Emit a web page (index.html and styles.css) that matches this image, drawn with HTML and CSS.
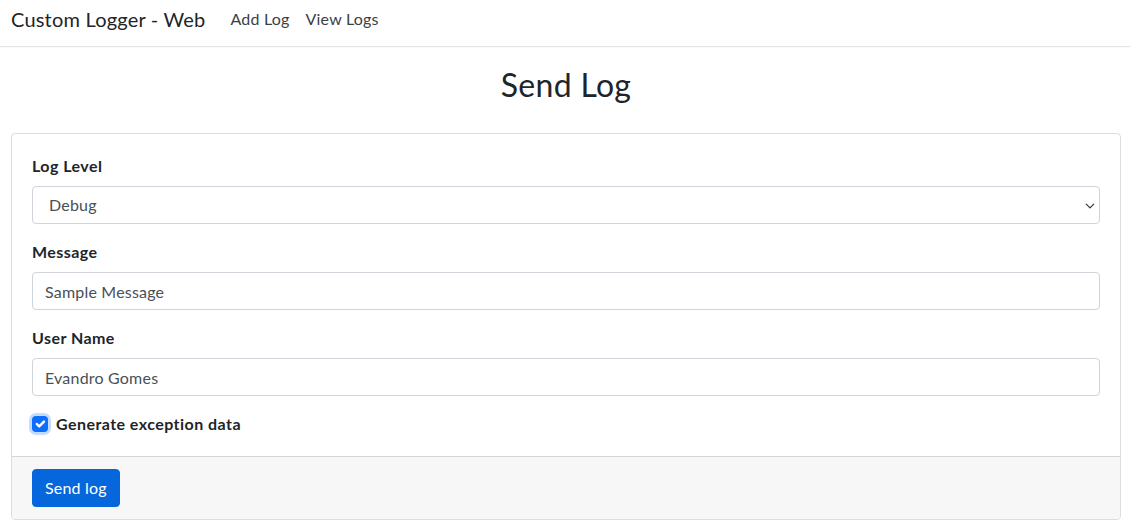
FILE: index.html
```html
<!DOCTYPE html>
<html lang="en">
<head>
<meta charset="utf-8">
<title>Custom Logger - Web</title>
<link rel="stylesheet" href="styles.css">
</head>
<body>
<header class="navbar">
  <a class="brand" href="#">Custom Logger - Web</a>
  <nav class="nav">
    <a class="nav-link" href="#">Add Log</a>
    <a class="nav-link" href="#">View Logs</a>
  </nav>
</header>
<main class="container">
  <h2 class="title">Send Log</h2>
  <form class="card">
    <div class="card-body">
      <div class="field">
        <label class="label" for="lvl">Log Level</label>
        <div class="select-wrap">
          <select id="lvl" class="control select">
            <option>Debug</option>
            <option>Information</option>
            <option>Warning</option>
            <option>Error</option>
          </select>
          <svg class="chev" width="16" height="16" viewBox="0 0 16 16"><path d="M2 5l6 6 6-6" fill="none" stroke="#343a40" stroke-width="2" stroke-linecap="round" stroke-linejoin="round"/></svg>
        </div>
      </div>
      <div class="field">
        <label class="label" for="msg">Message</label>
        <input id="msg" class="control" type="text" value="Sample Message">
      </div>
      <div class="field">
        <label class="label" for="usr">User Name</label>
        <input id="usr" class="control" type="text" value="Evandro Gomes">
      </div>
      <div class="check">
        <span class="check-box">
          <svg width="16" height="16" viewBox="0 0 20 20"><path d="M6 10l3 3 6-6" fill="none" stroke="#fff" stroke-width="3" stroke-linecap="round" stroke-linejoin="round"/></svg>
        </span>
        <label class="check-label">Generate exception data</label>
      </div>
    </div>
    <div class="card-footer">
      <button type="button" class="btn">Send log</button>
    </div>
  </form>
</main>
</body>
</html>
```
FILE: styles.css
```css
* { box-sizing: border-box; }
html, body { margin: 0; padding: 0; }
body {
  font-family: Lato, "Open Sans", "Liberation Sans", sans-serif;
  font-size: 16px;
  line-height: 1.5;
  color: #212529;
  background: #fff;
  letter-spacing: 0.2px;
}
a { text-decoration: none; }
.navbar {
  display: flex;
  align-items: center;
  height: 47px;
  padding: 0 11px 8px;
  border-bottom: 1px solid #e5e5e5;
  box-shadow: 0 1px 2px rgba(0,0,0,.03);
}
.brand {
  font-size: 20px;
  color: #212529;
  margin-right: 17px;
  line-height: 30px;
  letter-spacing: 0.2px;
}
.nav { display: flex; gap: 0; }
.nav-link {
  color: #3b3f44;
  padding: 0 8px;
  line-height: 24px;
}
.container {
  padding: 0 9px 0 11px;
}
.title {
  margin: 19px 0 29px;
  font-size: 32px;
  font-weight: 400;
  line-height: 1.2;
  text-align: center;
  letter-spacing: 0.3px;
}
.card {
  display: block;
  border: 1px solid rgba(0,0,0,.135);
  border-radius: 4px;
  overflow: hidden;
}
.card-body {
  padding: 20px 20px 20px;
}
.field { margin-bottom: 16px; }
.label {
  display: block;
  font-weight: 700;
  margin-bottom: 8px;
  line-height: 24px;
  letter-spacing: 0.45px;
}
.select-wrap { position: relative; }
.control {
  display: block;
  width: 100%;
  height: 38px;
  padding: 6px 12px;
  font: inherit;
  letter-spacing: 0.2px;
  color: #495057;
  background: #fff;
  border: 1px solid #ced4da;
  border-radius: 4px;
  outline: none;
}
.select {
  appearance: none;
  -webkit-appearance: none;
  padding-left: 16px;
  padding-right: 36px;
}
.chev {
  position: absolute;
  right: 5px;
  top: 15px;
  width: 10px;
  height: 10px;
  pointer-events: none;
}
.check {
  display: flex;
  align-items: center;
  gap: 8px;
  height: 24px;
}
.check-box {
  display: flex;
  align-items: center;
  justify-content: center;
  width: 16px;
  height: 16px;
  background: #0d6efd;
  border-radius: 4px;
  box-shadow: 0 0 0 3px rgba(13,110,253,.25);
}
.check-label {
  font-weight: 700;
  letter-spacing: 0.45px;
}
.card-footer {
  background: #f7f7f7;
  border-top: 1px solid rgba(0,0,0,.135);
  padding: 12px 20px;
}
.btn {
  display: inline-block;
  height: 38px;
  padding: 6px 12px;
  font: inherit;
  letter-spacing: 0.2px;
  color: #fff;
  background: #0667dc;
  border: 1px solid #0667dc;
  border-radius: 4px;
  cursor: pointer;
}
```
